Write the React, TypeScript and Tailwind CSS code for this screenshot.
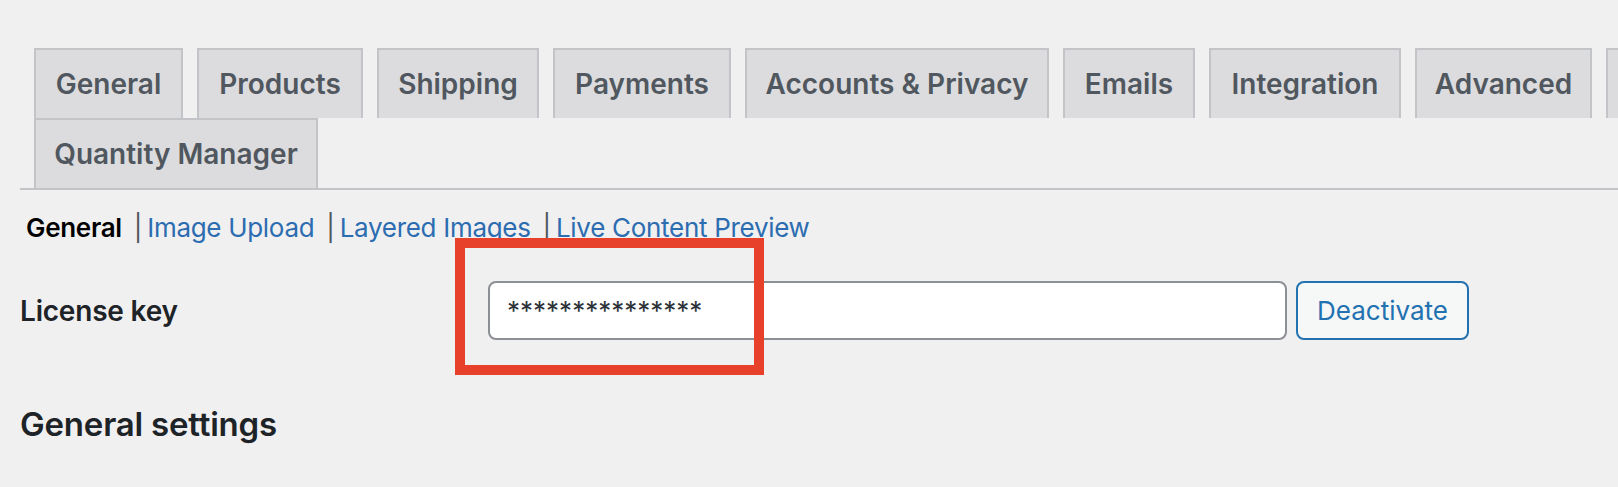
import React from 'react';

const tabs = [
  { label: 'General', w: 'w-[149px]' },
  { label: 'Products', w: 'w-[166px]' },
  { label: 'Shipping', w: 'w-[162px]' },
  { label: 'Payments', w: 'w-[178px]' },
  { label: 'Accounts & Privacy', w: 'w-[304px]' },
  { label: 'Emails', w: 'w-[132px]' },
  { label: 'Integration', w: 'w-[192px]' },
  { label: 'Advanced', w: 'w-[177px]' },
  { label: 'Site visibility', w: 'w-[210px]' },
  { label: 'Quantity Manager', w: 'w-[284px]' },
];

const sections = ['Image Upload', 'Layered Images', 'Live Content Preview'];

export default function App() {
  return (
    <div className="w-full min-h-screen overflow-hidden bg-[#f0f0f1] font-['Inter',sans-serif] text-[#1d2327]">
      <div className="px-[20px] pt-[48px]">
        {/* Settings tabs */}
        <nav className="flex w-[2000px] flex-wrap border-b-2 border-[#c3c4c7]">
          {tabs.map((t) => (
            <div
              key={t.label}
              className={`${t.w} ml-[14px] flex h-[70px] items-center justify-center border-2 border-b-0 border-[#c3c4c7] bg-[#dcdcde] text-[28px] font-semibold text-[#50575e] whitespace-nowrap`}
            >
              {t.label}
            </div>
          ))}
        </nav>

        {/* Sub sections */}
        <div className="mt-[20px] flex items-center pl-[6px] text-[26px] leading-[36px] tracking-[-0.3px]">
          <span className="font-semibold text-black">General</span>
          {sections.map((s) => (
            <React.Fragment key={s}>
              <span className="ml-[12px] mr-[5px] text-[#50575e]">|</span>
              <a className="text-[#2c6cb0]">{s}</a>
            </React.Fragment>
          ))}
        </div>

        {/* License row */}
        <div className="relative mt-[35px] flex items-center">
          <div className="w-[468px] text-[28px] font-semibold tracking-[-0.2px]">License key</div>
          <div className="flex h-[59px] w-[799px] items-center rounded-[8px] border-2 border-[#8c8f94] bg-white pl-[17px] text-[26px] text-[#2c3338]">
            ***************
          </div>
          <button className="ml-[9px] flex h-[59px] w-[173px] items-center justify-center rounded-[8px] border-2 border-[#2271b1] bg-[#f6f7f7] text-[26px] text-[#2271b1]">
            Deactivate
          </button>
          <div className="pointer-events-none absolute left-[435px] top-[-43px] h-[137px] w-[309px] border-[10px] border-[#e8412b]" />
        </div>

        <h2 className="mt-[62px] text-[33px] font-semibold leading-[44px] tracking-[-0.2px]">General settings</h2>
      </div>
    </div>
  );
}
